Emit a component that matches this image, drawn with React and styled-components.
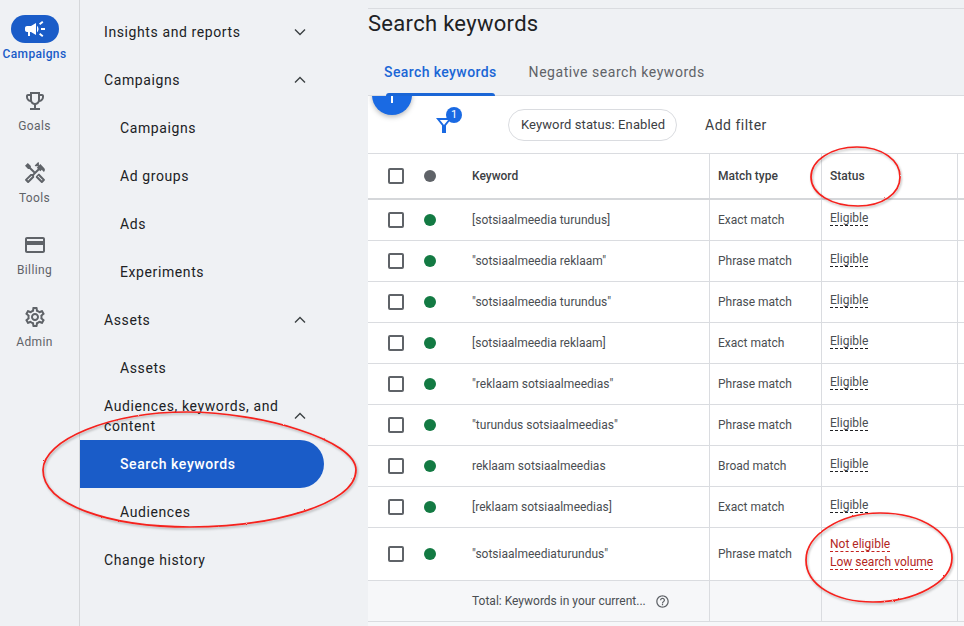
import React from "react";
import styled, { createGlobalStyle } from "styled-components";
import {
  MdCampaign,
  MdOutlineEmojiEvents,
  MdOutlineHandyman,
  MdOutlineCreditCard,
  MdOutlineSettings,
  MdOutlineHelpOutline,
} from "react-icons/md";

const Global = createGlobalStyle`
  html, body { margin: 0; padding: 0; background: #eff1f4; }
  body { font-family: Roboto, "Liberation Sans", sans-serif; }
  * { box-sizing: border-box; }
`;

const Page = styled.div`
  position: relative;
  display: flex;
  width: 964px;
  height: 626px;
  overflow: hidden;
  background: #eff1f4;
`;

const Rail = styled.aside`
  flex: 0 0 80px;
  display: flex;
  flex-direction: column;
  padding-top: 15px;
  border-right: 1px solid #d5d7da;
`;

const RailItem = styled.div`
  height: 72px;
  display: flex;
  flex-direction: column;
  align-items: center;
  padding-right: 10px;
  color: ${(p) => (p.$active ? "#1a5cc8" : "#5f6368")};
`;

const RailIcon = styled.div`
  width: 48px;
  height: 28px;
  border-radius: 14px;
  display: flex;
  align-items: center;
  justify-content: center;
  font-size: 24px;
  color: ${(p) => (p.$active ? "#fff" : "#5f6368")};
  background: ${(p) => (p.$active ? "#1a5cc8" : "transparent")};
`;

const RailLabel = styled.span`
  margin-top: 4px;
  font-size: 12px;
  line-height: 15px;
  font-weight: ${(p) => (p.$active ? 500 : 400)};
  letter-spacing: 0.35px;
  white-space: nowrap;
`;

const Nav = styled.nav`
  flex: 0 0 288px;
  padding-top: 8px;
`;

const NavRow = styled.div`
  width: 244px;
  height: 48px;
  display: flex;
  align-items: center;
  justify-content: space-between;
  padding: 0 14px 0 ${(p) => (p.$sub ? "40px" : "24px")};
  font-size: 14px;
  line-height: 20px;
  letter-spacing: 0.6px;
  color: ${(p) => (p.$active ? "#fff" : "#202124")};
  background: ${(p) => (p.$active ? "#1a5cc8" : "transparent")};
  border-radius: ${(p) => (p.$active ? "0 24px 24px 0" : "0")};
  font-weight: ${(p) => (p.$active ? 500 : 400)};
`;

const NavText = styled.span`
  max-width: 190px;
`;

const Chevron = styled.svg`
  flex: 0 0 12px;
  margin-right: 4px;
  fill: none;
  stroke: #3c4043;
  stroke-width: 1.4;
`;

const Main = styled.main`
  flex: 1;
  min-width: 0;
  display: flex;
  flex-direction: column;
  padding-top: 8px;
`;

const Title = styled.h1`
  margin: 0;
  height: 32px;
  border-top: 1px solid #dadce0;
  font-size: 22px;
  line-height: 30px;
  font-weight: 400;
  letter-spacing: 0.3px;
  color: #202124;
`;

const Tabs = styled.div`
  display: flex;
  height: 57px;
  flex: 0 0 57px;
  border-bottom: 1px solid #dadce0;
`;

const Tab = styled.div`
  position: relative;
  padding: 9px 16px 0;
  display: flex;
  align-items: center;
  font-size: 14px;
  font-weight: ${(p) => (p.$active ? 500 : 400)};
  letter-spacing: ${(p) => (p.$active ? "0.4px" : "0.55px")};
  color: ${(p) => (p.$active ? "#1a66d6" : "#5f6368")};

  ${(p) =>
    p.$active &&
    `&::after {
      content: "";
      position: absolute;
      left: 18px;
      right: 18px;
      bottom: -1px;
      height: 3px;
      background: #1a66d6;
      border-radius: 3px 3px 0 0;
    }`}
`;

const Card = styled.section`
  flex: 1;
  background: #fff;
  display: flex;
  flex-direction: column;
`;

const Toolbar = styled.div`
  position: relative;
  height: 58px;
  flex: 0 0 58px;
  display: flex;
  align-items: center;
  overflow: hidden;
  border-bottom: 1px solid #dadce0;
`;

const Fab = styled.div`
  position: absolute;
  left: 4px;
  top: -21px;
  width: 40px;
  height: 40px;
  border-radius: 50%;
  background: #1a6ae3;
  box-shadow: 0 2px 5px rgba(60, 64, 67, 0.35);
  display: flex;
  align-items: flex-end;
  justify-content: center;
  padding-bottom: 12px;

  &::before {
    content: "";
    width: 2px;
    height: 8px;
    background: #fff;
  }
`;

const FilterWrap = styled.div`
  position: relative;
  margin-left: 68px;
  width: 16px;
  height: 16px;
  margin-top: 1px;
  display: flex;
`;

const Badge = styled.span`
  position: absolute;
  left: 10px;
  top: -10px;
  width: 16px;
  height: 16px;
  border-radius: 50%;
  background: #1a6ae3;
  color: #fff;
  font-size: 11px;
  line-height: 16px;
  text-align: center;
`;

const Chip = styled.div`
  margin-left: 56px;
  width: 169px;
  height: 32px;
  padding: 0 12px;
  border: 1px solid #dadce0;
  border-radius: 16px;
  display: flex;
  align-items: center;
  font-size: 13px;
  letter-spacing: 0.1px;
  color: #3c4043;
  white-space: nowrap;
`;

const AddFilter = styled.span`
  margin-left: 28px;
  font-size: 14px;
  letter-spacing: 0.5px;
  color: #3c4043;
`;

const Row = styled.div`
  display: grid;
  grid-template-columns: 342px 112px 136px 1fr;
  flex: 0 0 ${(p) => p.$h}px;
  border-bottom: ${(p) => (p.$head ? "2px solid #d5d7da" : "1px solid #dadce0")};
  background: ${(p) => (p.$total ? "#f6f7f9" : "transparent")};
`;

const Cell = styled.div`
  display: flex;
  align-items: center;
  min-width: 0;
  padding-left: ${(p) => p.$pl ?? 8}px;
  border-right: 1px solid #dadce0;
  font-size: 12px;
  letter-spacing: 0;
  font-weight: ${(p) => (p.$head ? 500 : 400)};
  color: ${(p) => (p.$head ? "#3c4043" : "#4a4e52")};
  white-space: nowrap;

  &:last-child {
    border-right: none;
  }
`;

const Check = styled.span`
  flex: 0 0 16px;
  width: 16px;
  height: 16px;
  border: 2px solid #5f6368;
  border-radius: 2px;
`;

const Dot = styled.span`
  flex: 0 0 12px;
  width: 12px;
  height: 12px;
  margin: 0 36px 0 20px;
  border-radius: 50%;
  background: ${(p) => (p.$head ? "#5f6368" : "#137a43")};
`;

const StatusStack = styled.div`
  display: flex;
  flex-direction: column;
  align-items: flex-start;
  gap: ${(p) => (p.$tight ? "3px" : "0")};
  margin-top: ${(p) => (p.$tight ? "-2px" : "-4px")};
`;

const StatusText = styled.span`
  line-height: 14px;
  border-bottom: 1px dashed ${(p) => (p.$bad ? "#c5221f" : "#202124")};
  color: ${(p) => (p.$bad ? "#b3261e" : "#4a4e52")};
`;

const TotalText = styled.span`
  margin-left: 104px;
  width: 183px;
  flex: 0 0 auto;
`;

const Help = styled.span`
  display: flex;
  font-size: 15px;
  color: #5f6368;
`;

const Annotations = styled.svg`
  position: absolute;
  inset: 0;
  pointer-events: none;
`;

const Ink = styled.path`
  fill: none;
  stroke: #f5201c;
  stroke-width: 1.7;
  filter: url(#rough);
`;

const railItems = [
  { label: "Campaigns", Icon: MdCampaign, active: true },
  { label: "Goals", Icon: MdOutlineEmojiEvents },
  { label: "Tools", Icon: MdOutlineHandyman },
  { label: "Billing", Icon: MdOutlineCreditCard },
  { label: "Admin", Icon: MdOutlineSettings },
];

const navItems = [
  { label: "Insights and reports", chev: "down" },
  { label: "Campaigns", chev: "up" },
  { label: "Campaigns", sub: true },
  { label: "Ad groups", sub: true },
  { label: "Ads", sub: true },
  { label: "Experiments", sub: true },
  { label: "Assets", chev: "up" },
  { label: "Assets", sub: true },
  { label: "Audiences, keywords, and content", chev: "up" },
  { label: "Search keywords", sub: true, active: true },
  { label: "Audiences", sub: true },
  { label: "Change history" },
];

const rows = [
  ["[sotsiaalmeedia turundus]", "Exact match"],
  ['"sotsiaalmeedia reklaam"', "Phrase match"],
  ['"sotsiaalmeedia turundus"', "Phrase match"],
  ["[sotsiaalmeedia reklaam]", "Exact match"],
  ['"reklaam sotsiaalmeedias"', "Phrase match"],
  ['"turundus sotsiaalmeedias"', "Phrase match"],
  ["reklaam sotsiaalmeedias", "Broad match"],
  ["[reklaam sotsiaalmeedias]", "Exact match"],
];

export default function App() {
  return (
    <Page>
      <Global />
      <Rail>
        {railItems.map(({ label, Icon, active }) => (
          <RailItem key={label} $active={active}>
            <RailIcon $active={active}>
              <Icon />
            </RailIcon>
            <RailLabel $active={active}>{label}</RailLabel>
          </RailItem>
        ))}
      </Rail>

      <Nav>
        {navItems.map((item, i) => (
          <NavRow key={i} $sub={item.sub} $active={item.active}>
            <NavText>{item.label}</NavText>
            {item.chev && (
              <Chevron width="12" height="8" viewBox="0 0 12 8">
                <path d={item.chev === "up" ? "M1 6.5L6 1.5L11 6.5" : "M1 1.5L6 6.5L11 1.5"} />
              </Chevron>
            )}
          </NavRow>
        ))}
      </Nav>

      <Main>
        <Title>Search keywords</Title>
        <Tabs>
          <Tab $active>Search keywords</Tab>
          <Tab>Negative search keywords</Tab>
        </Tabs>
        <Card>
          <Toolbar>
            <Fab />
            <FilterWrap>
              <svg width="16" height="16" viewBox="0 0 16 16">
                <path d="M0 1h16L10 8.5V16H6V8.5L0 1zm3.9 1.9L8 8l4.1-5.1H3.9z" fill="#1a6ae3" fillRule="evenodd" />
              </svg>
              <Badge>1</Badge>
            </FilterWrap>
            <Chip>Keyword status: Enabled</Chip>
            <AddFilter>Add filter</AddFilter>
          </Toolbar>

          <Row $h={46} $head>
            <Cell $pl={20} $head>
              <Check />
              <Dot $head />
              Keyword
            </Cell>
            <Cell $head>Match type</Cell>
            <Cell $head>Status</Cell>
            <Cell />
          </Row>

          {rows.map(([kw, match]) => (
            <Row key={kw} $h={41}>
              <Cell $pl={20}>
                <Check />
                <Dot />
                {kw}
              </Cell>
              <Cell>{match}</Cell>
              <Cell>
                <StatusStack>
                  <StatusText>Eligible</StatusText>
                </StatusStack>
              </Cell>
              <Cell />
            </Row>
          ))}

          <Row $h={53}>
            <Cell $pl={20}>
              <Check />
              <Dot />
              "sotsiaalmeediaturundus"
            </Cell>
            <Cell>Phrase match</Cell>
            <Cell>
              <StatusStack $tight>
                <StatusText $bad>Not eligible</StatusText>
                <StatusText $bad>Low search volume</StatusText>
              </StatusStack>
            </Cell>
            <Cell />
          </Row>

          <Row $h={41} $total>
            <Cell $pl={0}>
              <TotalText>Total: Keywords in your current...</TotalText>
              <Help>
                <MdOutlineHelpOutline />
              </Help>
            </Cell>
            <Cell />
            <Cell />
            <Cell />
          </Row>
          <Row $h={5} $total />
        </Card>
      </Main>

      <Annotations width="964" height="626" viewBox="0 0 964 626">
        <defs>
          <filter id="rough" x="-5%" y="-10%" width="110%" height="120%">
            <feTurbulence type="fractalNoise" baseFrequency="0.35" numOctaves="2" seed="3" result="n" />
            <feDisplacementMap in="SourceGraphic" in2="n" scale="1.6" result="d" />
            <feDropShadow in="d" dx="1" dy="1.5" stdDeviation="1" floodColor="#000" floodOpacity="0.3" />
          </filter>
        </defs>
        <Ink d="M811 177C811 160 832 147 857 147C882 147 900 160 900 177C900 194 882 206 858 206C832 206 811 194 811 177Z" />
        <Ink d="M43 470C43 440 110 412 187 412C260 412 356 440 356 470C356 505 270 527 190 527C110 527 43 505 43 470Z" />
        <Ink d="M806 560C806 535 840 513 880 513C925 513 952 535 952 558C952 582 915 602 873 602C835 602 806 585 806 560Z" />
      </Annotations>
    </Page>
  );
}
